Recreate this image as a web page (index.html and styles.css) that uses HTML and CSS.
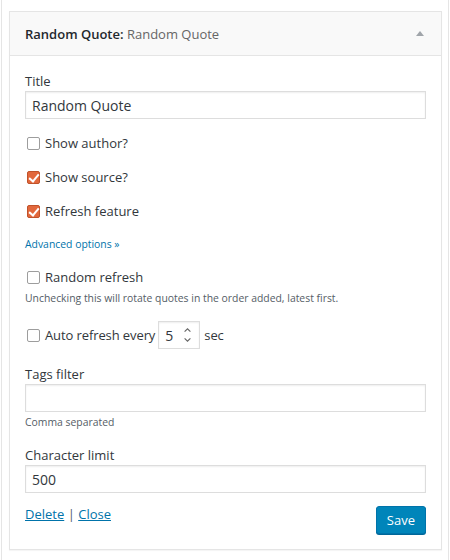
FILE: index.html
```html
<!DOCTYPE html>
<html lang="en">
<head>
<meta charset="utf-8">
<title>Random Quote widget</title>
<link rel="stylesheet" href="styles.css">
</head>
<body>
<div class="sidebar">
  <div class="widget">
    <div class="widget-top">
      <h3 class="widget-title">Random Quote: <span class="in-title">Random Quote</span></h3>
      <span class="toggle"></span>
    </div>
    <form class="widget-inside">
      <label class="field-label" for="title">Title</label>
      <input class="text-input" id="title" type="text" value="Random Quote">

      <label class="check-row first"><input type="checkbox">Show author?</label>
      <label class="check-row"><input type="checkbox" checked>Show source?</label>
      <label class="check-row"><input type="checkbox" checked>Refresh feature</label>

      <div class="advanced-row"><a class="advanced" href="#">Advanced options »</a></div>

      <label class="check-row random"><input type="checkbox">Random refresh</label>
      <div class="description">Unchecking this will rotate quotes in the order added, latest first.</div>

      <div class="auto-row">
        <label class="check-row inline"><input type="checkbox">Auto refresh every</label>
        <div class="num">
          <input class="num-input" type="text" value="5">
          <svg class="spin" width="7" height="14" viewBox="0 0 7 14"><path d="M0.6 3.6 L3.5 0.9 L6.4 3.6" fill="none" stroke="#666" stroke-width="1.2"/><path d="M0.6 10.4 L3.5 13.1 L6.4 10.4" fill="none" stroke="#666" stroke-width="1.2"/></svg>
        </div>
        <span>sec</span>
      </div>

      <label class="field-label gap" for="tags">Tags filter</label>
      <input class="text-input" id="tags" type="text" value="">
      <div class="description small-gap">Comma separated</div>

      <label class="field-label gap" for="limit">Character limit</label>
      <input class="text-input" id="limit" type="text" value="500">

      <div class="footer">
        <div class="links"><a href="#">Delete</a> <span class="sep">|</span> <a href="#">Close</a></div>
        <button class="save-btn" type="button">Save</button>
      </div>
    </form>
  </div>
</div>
</body>
</html>
```

FILE: styles.css
```css
* { box-sizing: border-box; }

body {
  margin: 0;
  background: #fff;
  font-family: "Open Sans", "DejaVu Sans", sans-serif;
  font-size: 13px;
  color: #32373c;
}

.sidebar {
  margin: 0 1px;
  min-height: 560px;
  border-left: 1px solid #e5e5e5;
  border-right: 1px solid #e5e5e5;
  padding: 11px 6px 0 7px;
}

.widget {
  background: #fff;
  border: 1px solid #e5e5e5;
  box-shadow: 0 1px 1px rgba(0, 0, 0, .04);
}

.widget-top {
  height: 44px;
  display: flex;
  align-items: center;
  justify-content: space-between;
  padding: 0 17px 0 15px;
  background: #f9f9f9;
  border-bottom: 1px solid #e5e5e5;
}

.widget-title {
  margin: 0;
  font-size: 13px;
  line-height: 20px;
  font-weight: 600;
  color: #23282d;
}

.in-title {
  font-weight: 400;
  color: #666;
}

.toggle {
  width: 0;
  height: 0;
  border-left: 4px solid transparent;
  border-right: 4px solid transparent;
  border-bottom: 5px solid #a0a5aa;
}

.widget-inside {
  display: flex;
  flex-direction: column;
  padding: 15px 15px 15px;
  margin: 0;
}

.field-label {
  line-height: 20px;
  color: #32373c;
}

.field-label.gap { margin-top: 15px; }

.text-input {
  display: block;
  width: 100%;
  height: 28px;
  margin: 0;
  padding: 0 6px;
  border: 1px solid #ddd;
  border-radius: 0;
  box-shadow: inset 0 1px 2px rgba(0, 0, 0, .07);
  background: #fff;
  font: 14px "Open Sans", sans-serif;
  color: #32373c;
  outline: none;
}

.check-row {
  display: flex;
  align-items: center;
  height: 20px;
  margin-top: 14px;
}

.check-row.random { margin-top: 13px; }
.check-row.inline { margin-top: 0; }

.check-row input {
  appearance: none;
  -webkit-appearance: none;
  position: relative;
  flex: none;
  width: 13px;
  height: 13px;
  margin: 0 5px 0 2px;
  border: 1px solid #9d9d9d;
  border-radius: 2px;
  background: #fff;
}

.check-row input:checked {
  background: #e2683c;
  border-color: #c0522a;
}

.check-row input:checked::after {
  content: "";
  position: absolute;
  left: 3px;
  top: 0;
  width: 4px;
  height: 8px;
  border: solid #fff;
  border-width: 0 2px 2px 0;
  transform: rotate(40deg);
}

.advanced-row {
  margin-top: 13px;
  line-height: 20px;
  font-size: 10.4px;
}

.advanced {
  color: #0073aa;
  text-decoration: none;
}

.description {
  margin-top: 3px;
  font-size: 10.4px;
  line-height: 16px;
  color: #555d66;
}

.description.small-gap { margin-top: 2px; }

.auto-row {
  display: flex;
  align-items: center;
  height: 28px;
  margin-top: 15px;
  letter-spacing: -0.1px;
}

.num {
  display: flex;
  align-items: center;
  width: 42px;
  height: 28px;
  margin: 0 4px 0 3px;
  border: 1px solid #ddd;
  box-shadow: inset 0 1px 2px rgba(0, 0, 0, .07);
  background: #fff;
}

.num-input {
  width: 24px;
  height: 26px;
  border: 0;
  padding: 0 0 0 6px;
  margin: 0;
  background: transparent;
  font: 14px "Open Sans", sans-serif;
  color: #32373c;
  outline: none;
}

.spin {
  display: block;
  margin-left: 1px;
}

.footer {
  display: flex;
  justify-content: space-between;
  align-items: flex-start;
  margin-top: 13px;
}

.links {
  line-height: 16px;
}

.links a {
  color: #0073aa;
  text-decoration: underline;
}

.sep { color: #555d66; }

.save-btn {
  height: 28px;
  padding: 0 10px;
  border: 1px solid #0073aa;
  border-radius: 3px;
  background: #0085ba;
  box-shadow: 0 1px 0 #006799;
  color: #fff;
  font: 13px "Open Sans", sans-serif;
  line-height: 26px;
}
```
